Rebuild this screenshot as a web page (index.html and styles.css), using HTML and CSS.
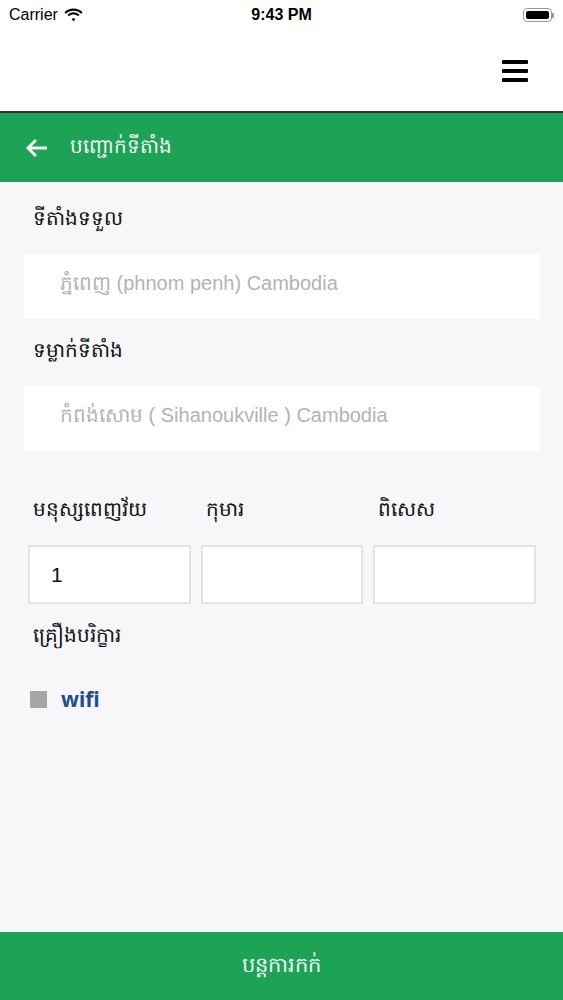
FILE: index.html
```html
<!DOCTYPE html>
<html lang="km">
<head>
    <meta charset="UTF-8">
    <meta name="viewport" content="width=device-width, initial-scale=1.0">
    <title>បញ្ជោក់ទីតាំង</title>
    <link rel="stylesheet" href="styles.css">
</head>
<body>
    <div class="status-bar">
        <div class="carrier">
            Carrier
            <svg class="wifi-icon" width="19" height="14" viewBox="0 0 17 12">
                <path d="M8.5 2.2c2.6 0 5 1 6.8 2.7l1.3-1.4C14.4 1.4 11.6.2 8.5.2S2.6 1.4.4 3.5l1.3 1.4C3.5 3.2 5.9 2.2 8.5 2.2z" fill="#000"/>
                <path d="M8.5 5.6c1.6 0 3 .6 4.1 1.6l1.3-1.4C12.5 4.4 10.6 3.6 8.5 3.6S4.5 4.4 3.1 5.8l1.3 1.4C5.5 6.2 6.9 5.6 8.5 5.6z" fill="#000"/>
                <path d="M8.5 8.9c.7 0 1.3.3 1.8.7L8.5 11.6 6.7 9.6c.5-.4 1.1-.7 1.8-.7z" fill="#000"/>
            </svg>
        </div>
        <div class="clock">9:43 PM</div>
        <div class="battery">
            <div class="battery-body"><div class="battery-level"></div></div>
            <div class="battery-tip"></div>
        </div>
    </div>

    <div class="top-nav">
        <svg class="menu-icon" width="26" height="22" viewBox="0 0 26 22">
            <rect x="0" y="0" width="26" height="4" rx="1" fill="#000"/>
            <rect x="0" y="9" width="26" height="4" rx="1" fill="#000"/>
            <rect x="0" y="18" width="26" height="4" rx="1" fill="#000"/>
        </svg>
    </div>

    <div class="title-bar">
        <svg class="back-icon" width="24" height="20" viewBox="0 0 24 20">
            <path d="M22 10H3M11 2L3 10l8 8" fill="none" stroke="#f2f2f2" stroke-width="3"/>
        </svg>
        <h1>បញ្ជោក់ទីតាំង</h1>
    </div>

    <div class="content">
        <label class="field-label">ទីតាំងទទួល</label>
        <div class="place-input">ភ្នំពេញ (phnom penh) Cambodia</div>

        <label class="field-label">ទម្លាក់ទីតាំង</label>
        <div class="place-input">កំពង់សោម ( Sihanoukville ) Cambodia</div>

        <div class="people-grid">
            <div class="people-col">
                <label class="field-label">មនុស្សពេញវ័យ</label>
                <div class="number-box">1</div>
            </div>
            <div class="people-col">
                <label class="field-label">កុមារ</label>
                <div class="number-box"></div>
            </div>
            <div class="people-col">
                <label class="field-label">ពិសេស</label>
                <div class="number-box"></div>
            </div>
        </div>

        <label class="field-label">គ្រឿងបរិក្ខារ</label>
        <div class="option-row">
            <span class="checkbox"></span>
            <span class="option-name">wifi</span>
        </div>
    </div>

    <div class="submit-bar">បន្តការកក់</div>
</body>
</html>
```

FILE: styles.css
```css
* {
    margin: 0;
    padding: 0;
    box-sizing: border-box;
}

body {
    font-family: 'Noto Sans', 'Liberation Sans', sans-serif;
    background: #f7f7f9;
    height: 1000px;
    display: flex;
    flex-direction: column;
    overflow: hidden;
}

.status-bar {
    height: 30px;
    background: white;
    display: flex;
    justify-content: space-between;
    align-items: center;
    padding: 0 9px;
    font-family: 'Liberation Sans', sans-serif;
    font-size: 16px;
    color: #000;
    position: relative;
}

.carrier {
    display: flex;
    align-items: center;
    gap: 6px;
}

.clock {
    position: absolute;
    left: 0;
    right: 0;
    text-align: center;
    font-weight: bold;
}

.battery {
    display: flex;
    align-items: center;
}

.battery-body {
    width: 29px;
    height: 14px;
    border: 1px solid #999;
    border-radius: 4px;
    padding: 2px;
}

.battery-level {
    height: 100%;
    background: #000;
    border-radius: 2px;
}

.battery-tip {
    width: 2px;
    height: 5px;
    background: #999;
    border-radius: 0 1px 1px 0;
}

.top-nav {
    height: 83px;
    background: white;
    display: flex;
    justify-content: flex-end;
    align-items: center;
    padding-right: 35px;
    border-bottom: 2px solid #333;
}

.title-bar {
    height: 69px;
    background: #1da356;
    display: flex;
    align-items: center;
    padding-left: 25px;
    gap: 21px;
    color: #f2f2f2;
}

.title-bar h1 {
    font-size: 20px;
    font-weight: normal;
}

.content {
    flex: 1;
    padding: 20px 23px 0 24px;
}

.field-label {
    display: block;
    font-size: 20px;
    color: #111;
    padding-left: 9px;
    height: 52px;
    line-height: 32px;
}

.place-input {
    background: white;
    height: 65px;
    display: flex;
    align-items: center;
    padding-left: 36px;
    padding-bottom: 4px;
    font-family: 'Liberation Sans', sans-serif;
    font-size: 20px;
    color: #b3b3b3;
    margin-bottom: 15px;
}

.people-grid {
    display: grid;
    grid-template-columns: repeat(3, 1fr);
    gap: 10px;
    padding: 27px 4px 0 4px;
    margin-bottom: 15px;
}

.people-grid .field-label {
    padding-left: 5px;
    height: 52px;
}

.number-box {
    height: 59px;
    background: white;
    border: 2px solid #e3e3e3;
    display: flex;
    align-items: center;
    padding-left: 21px;
    font-family: 'Liberation Sans', sans-serif;
    font-size: 21px;
    color: #111;
}

.option-row {
    display: flex;
    align-items: center;
    gap: 14px;
    padding: 14px 0 0 6px;
}

.checkbox {
    width: 17px;
    height: 17px;
    background: #a6a6a6;
}

.option-name {
    font-size: 21px;
    font-weight: bold;
    color: #1f4e8c;
}

.submit-bar {
    height: 68px;
    background: #1da356;
    color: #f2f2f2;
    font-size: 21px;
    display: flex;
    justify-content: center;
    align-items: center;
}
```
